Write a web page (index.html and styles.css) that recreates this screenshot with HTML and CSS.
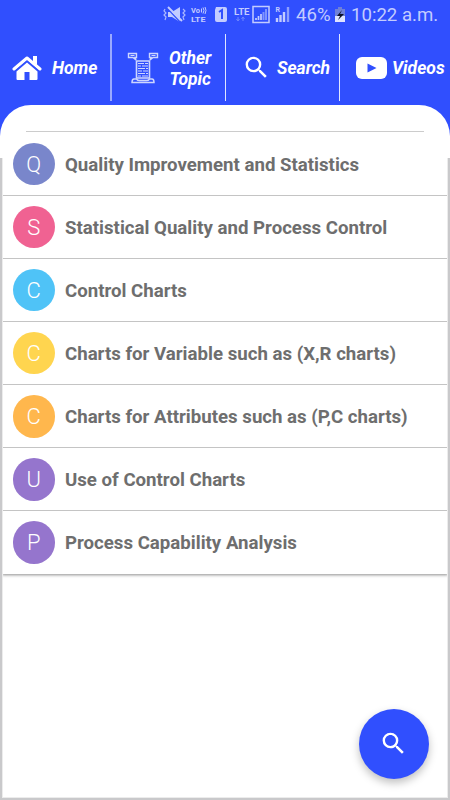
FILE: index.html
```html
<!DOCTYPE html>
<html lang="en">

<head>
    <meta charset="UTF-8">
    <meta name="viewport" content="width=device-width, initial-scale=1.0">
    <title>Quality Control</title>
    <link rel="stylesheet" href="styles.css">
</head>

<body>
    <header>
        <div class="status-bar">
            <svg class="status-icons" width="132" height="30" viewBox="0 0 132 30">
                <!-- vibrate / mute -->
                <path d="M5 12h4l8-5v15l-8-5H5z" fill="#c3ccff" />
                <path d="M4 8l14 15" stroke="#304ffe" stroke-width="1.200" />
                <path d="M5 7l14 14" stroke="#c3ccff" stroke-width="2" />
                <path d="M2 9l-1 2 2 2-2 2 2 2-1 3M20 9l2 2-2 2 2 2-2 2 1 3" fill="none" stroke="#aab7ff" stroke-width="1.200" />
                <!-- VoLTE -->
                <text x="28" y="12.500" font-size="7" textLength="9" lengthAdjust="spacingAndGlyphs">Vo</text>
                <path d="M38.500 8.500v4M40 7.500q2 3 0 6M42 7q2 3.500 0 7" fill="none" stroke="#c3ccff" />
                <text x="28" y="22" font-size="8" textLength="14.500" lengthAdjust="spacingAndGlyphs">LTE</text>
                <!-- sim -->
                <path d="M54 7h9q2 0 2 2v11q0 2-2 2h-8q-2 0-2-2V10z" transform="translate(-1)" fill="#c3ccff" />
                <path d="M55.500 12l3-2v9" transform="translate(.5)" fill="none" stroke="#304ffe" stroke-width="2" />
                <!-- signal -->
                <text x="71" y="14.500" font-size="9.500" textLength="15.500" lengthAdjust="spacingAndGlyphs">LTE</text>
                <path d="M75 17v4M73.500 19l1.500 2 1.500-2M80 21v-4M78.500 19l1.500-2 1.500 2" fill="none" stroke="#6f86ff" />
                <path d="M90 6.500h16v16H90z" fill="none" stroke="#c3ccff" stroke-width="1.500" />
                <path d="M93 20v-2M95.500 20v-4M98 20v-6" stroke="#c3ccff" stroke-width="1.700" />
                <path d="M100.500 20v-8M103 20V9" stroke="#7e93ff" stroke-width="2" />
                <text x="112.500" y="12" font-size="7">R</text>
                <path d="M114 22v-4M117.500 22v-7M121 22V12" stroke="#c3ccff" stroke-width="2.400" />
                <path d="M125 22V7" stroke="#8fa0ff" stroke-width="2.400" />
            </svg>
            <span class="percent">46%</span>
            <svg class="battery" width="10" height="16" viewBox="0 0 10 16">
                <path d="M3 0h4v2h3v7H0V2h3z" fill="#6f80d8" />
                <path d="M0 9h10v6H0z" fill="#dfe4ff" />
                <path d="M7 3L2 9h3l-2 4 6-6H5z" fill="#0c1028" />
            </svg>
            <span class="clock">10:22 a.m.</span>
        </div>
        <nav>
            <a class="tab home">
                <svg width="30" height="26" viewBox="0 0 30 26">
                    <path d="M2 14L15 3l13 11" fill="none" stroke="#fff" stroke-width="3" stroke-linecap="round" stroke-linejoin="round" />
                    <path d="M21 1h4v9l-4-3zM4.500 16.500L15 7.500l10.500 9V24q0 1-1 1h-7v-8h-5v8h-7q-1 0-1-1z" fill="#fff" />
                    <path d="M3.500 15.500L15 6l11.500 9.500" fill="none" stroke="#304ffe" stroke-width=".8" />
                </svg>
                <span>Home</span>
            </a>
            <a class="tab topic">
                <svg width="32" height="32" viewBox="0 0 32 32" fill="none" stroke="#cdd6ff">
                    <path d="M1.500 1.500h8v4H8l1 2.500-3-2.500H1.500zM22.500 1.500h8v4H26L23 8l1-2.500h-1.500z" stroke-width="1.400" />
                    <path d="M3.500 3.500h4M24.500 3.500h4" />
                    <path d="M9.500 9h13v17h-13z" stroke-width="1.600" />
                    <path d="M11 11.500h6m1 0h3M11 14h3m1 0h6M11 16.500h7m1 0h2M11 19h4m1 0h5M11 21.500h7m1 0h2M11 24h3m1 0h6" stroke-width="1.200" />
                    <path d="M9.500 27H7q-2 0-2 3.500h22q0-3.500-2-3.500h-2.500q-1 1.500-3 1.500h-7q-2 0-3-1.500z" stroke-width="1.500" />
                </svg>
                <span>Other<br>Topic</span>
            </a>
            <a class="tab search">
                <svg width="29" height="29" viewBox="0 0 24 24">
                    <path d="M15.500 14h-.79l-.28-.27A6.471 6.471 0 0 0 16 9.500 6.500 6.500 0 1 0 9.500 16c1.610 0 3.090-.59 4.230-1.570l.27.28v.79l5 4.990L20.490 19l-4.990-5zm-6 0C7.010 14 5 11.990 5 9.500S7.010 5 9.500 5 14 7.010 14 9.500 11.990 14 9.500 14z" fill="#fff" />
                </svg>
                <span>Search</span>
            </a>
            <a class="tab videos">
                <svg width="31" height="22" viewBox="0 0 31 22">
                    <rect width="31" height="22" rx="6" fill="#fff" />
                    <path d="M11.500 6.500v9l9-4.500z" fill="#304ffe" />
                </svg>
                <span>Videos</span>
            </a>
        </nav>
    </header>

    <main>
        <div class="list-top"></div>
        <ul class="topics">
            <li><span class="avatar indigo">Q</span><span class="title">Quality Improvement and Statistics</span></li>
            <li><span class="avatar pink">S</span><span class="title">Statistical Quality and Process Control</span></li>
            <li><span class="avatar blue">C</span><span class="title">Control Charts</span></li>
            <li><span class="avatar yellow">C</span><span class="title">Charts for Variable such as (X,R charts)</span></li>
            <li><span class="avatar orange">C</span><span class="title">Charts for Attributes such as (P,C charts)</span></li>
            <li><span class="avatar purple">U</span><span class="title">Use of Control Charts</span></li>
            <li><span class="avatar purple">P</span><span class="title">Process Capability Analysis</span></li>
        </ul>
    </main>

    <button class="fab" aria-label="Search">
        <svg width="29" height="29" viewBox="0 0 24 24">
            <path d="M15.500 14h-.79l-.28-.27A6.471 6.471 0 0 0 16 9.500 6.500 6.500 0 1 0 9.500 16c1.610 0 3.090-.59 4.230-1.570l.27.28v.79l5 4.990L20.490 19l-4.990-5zm-6 0C7.010 14 5 11.990 5 9.500S7.010 5 9.500 5 14 7.010 14 9.500 11.990 14 9.500 14z" fill="#fff" />
        </svg>
    </button>
</body>

</html>
```
FILE: styles.css
```css
* {
    box-sizing: border-box;
}

body {
    margin: 0;
    height: 800px;
    display: flex;
    flex-direction: column;
    overflow: hidden;
    background-color: #304ffe;
    font-family: Roboto, sans-serif;
}

header {
    height: 105px;
    color: #fff;
}

.status-bar {
    height: 30px;
    display: flex;
    align-items: center;
    padding-left: 163px;
    color: #c3ccff;
    font-size: 18.6px;
    white-space: nowrap;
}

.status-icons {
    flex: none;
}

.status-icons text {
    fill: #c3ccff;
    font-weight: 700;
}

.percent {
    margin-left: 1px;
    width: 36px;
}

.battery {
    flex: none;
    margin-left: 3px;
}

.clock {
    margin-left: 6px;
}

nav {
    display: grid;
    grid-template-columns: 112px 114px 114px 110px;
    height: 67px;
    margin-top: 4px;
}

.tab {
    display: flex;
    align-items: center;
    font-size: 17.5px;
    font-weight: 700;
    font-style: italic;
    line-height: 21px;
    text-align: center;
    border-right: 1px solid #dfe6ff;
}

.tab svg {
    flex: none;
}

.tab span {
    padding-top: 2px;
}

.home {
    padding-left: 12px;
    gap: 10px;
    border-right: 2px solid #9aaaff;
}

.topic {
    padding-left: 15px;
    gap: 10px;
}

.search {
    padding-left: 16px;
    gap: 6px;
}

.videos {
    padding-left: 16px;
    gap: 5px;
    border-right: none;
}

main {
    position: relative;
    flex: 1;
    padding: 26px 2px 0;
    background-color: #fff;
    border-radius: 31px 31px 0 0;
}

/* grey frame that starts under the rounded corners */
main::after {
    content: "";
    position: absolute;
    top: 52px;
    left: 0;
    right: 0;
    bottom: 0;
    border: 2px solid #c9c9cb;
    border-top: none;
    box-shadow: inset 0 0 0 1px #ececec;
    clip-path: inset(1px 0 0 0);
    pointer-events: none;
}

.list-top {
    height: 1px;
    margin: 0 24px;
    background-color: #ccc;
}

.topics {
    margin: 0;
    padding: 0;
    list-style: none;
    box-shadow: 0 1px 3px rgba(0, 0, 0, .45);
    clip-path: inset(0 0 -6px 0);
}

.topics li {
    display: flex;
    align-items: center;
    height: 63.1px;
    padding-left: 10.5px;
    border-bottom: 1px solid #c4c4c4;
}

.topics li:first-child {
    height: 64px;
    padding-top: 1px;
}

.topics li:last-child {
    height: 62.5px;
    border-bottom: none;
}

.avatar {
    display: flex;
    align-items: center;
    justify-content: center;
    width: 42.5px;
    height: 42.5px;
    border-radius: 50%;
    color: #fff;
    font-size: 22px;
    font-weight: 300;
}

.title {
    margin-left: 10px;
    padding-top: 1px;
    color: #6e6e6e;
    font-size: 18.65px;
    font-weight: 700;
    white-space: nowrap;
}

.indigo {
    background-color: #7986cb;
}

.pink {
    background-color: #f06292;
}

.blue {
    background-color: #4fc3f7;
}

.yellow {
    background-color: #ffd54f;
}

.orange {
    background-color: #ffb74d;
}

.purple {
    background-color: #9575cd;
}

.fab {
    position: fixed;
    right: 21px;
    bottom: 21px;
    display: flex;
    align-items: center;
    justify-content: center;
    width: 70px;
    height: 70px;
    padding: 0 2px 2px 0;
    border: none;
    border-radius: 50%;
    background-color: #304ffe;
    box-shadow: 0 4px 8px rgba(0, 0, 0, .25);
}
```
